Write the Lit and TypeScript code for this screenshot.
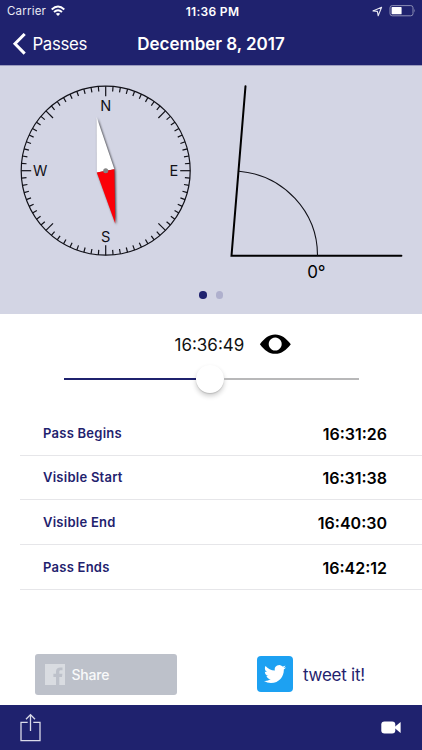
import { LitElement, html, css, svg } from "lit";
import { customElement, state } from "lit/decorators.js";

const TICKS = Array.from({ length: 72 }, (_, i) => i * 5);

@customElement("pass-compass")
class PassCompass extends LitElement {
  static styles = css`
    :host { display: block; width: 211px; height: 248px; }
    svg { display: block; }
    .line { stroke: #111118; stroke-width: 1.2; fill: none; }
    .letter { font: 400 14.6px Inter, sans-serif; fill: #111118; text-anchor: middle; }
    .needle { filter: drop-shadow(1px 1px 1.3px rgba(0, 0, 0, 0.7)); }
  `;
  render() {
    return html`<svg width="211" height="248" viewBox="0 66 211 248">
      <circle class="line" cx="105.7" cy="170.7" r="84.5" />
      ${TICKS.map(
        (a) => svg`<line class="line" x1="105.7" y1="86.2" x2="105.7" y2=${a % 45 === 0 ? 96.2 : 91.2}
          transform="rotate(${a} 105.7 170.7)" />`
      )}
      <text class="letter" x="105.7" y="111">N</text>
      <text class="letter" x="105.7" y="242.4">S</text>
      <text class="letter" x="40.2" y="176.4">W</text>
      <text class="letter" x="173.8" y="176.4">E</text>
      <g class="needle">
        <path d="M96.6 117 L114.4 169.2 L96.8 172.5Z" fill="#fff" />
        <path d="M114.4 169.2 L115.3 223.8 L96.8 172.5Z" fill="#fb0007" />
      </g>
      <circle cx="105.7" cy="170.7" r="2.5" fill="#858585" />
    </svg>`;
  }
}

@customElement("pass-elevation")
class PassElevation extends LitElement {
  static styles = css`
    :host { display: block; width: 211px; height: 248px; }
    svg { display: block; }
    .ray { stroke: #000; stroke-width: 2; fill: none; stroke-linecap: round; stroke-linejoin: miter; }
    .arc { stroke: #111118; stroke-width: 1.1; fill: none; }
    .value { font: 400 17px Inter, sans-serif; fill: #000; text-anchor: middle; letter-spacing: -0.4px; }
  `;
  render() {
    return html`<svg width="211" height="248" viewBox="211 66 211 248">
      <path class="ray" d="M245.5 86.2 L231.5 255.7 H401.4" />
      <path class="arc" d="M317.5 255.7 A86 84.5 0 0 0 239 171.2" />
      <text class="value" x="316.2" y="277.7">0°</text>
    </svg>`;
  }
}

@customElement("app-root")
class AppRoot extends LitElement {
  static styles = css`
    :host {
      display: flex; flex-direction: column; width: 422px; height: 750px;
      background: #fff; font-family: Inter, "Liberation Sans", sans-serif; overflow: hidden;
    }
    svg { display: block; }
    header { background: #1f226e; color: #fff; height: 66px; border-bottom: 1px solid #9a9bbd; box-sizing: border-box; }
    .status { display: grid; grid-template-columns: 1fr auto 1fr; align-items: center; height: 22px; padding: 0 6px 0 7px; font-size: 11.5px; }
    .carrier { display: flex; align-items: center; gap: 5px; letter-spacing: 0.2px; color: #e9e9f3; }
    .clock { font-size: 12px; font-weight: 600; letter-spacing: 0.3px; padding-left: 2px; }
    .power { display: flex; justify-content: flex-end; align-items: center; gap: 6px; }
    .nav { display: grid; grid-template-columns: 1fr auto 1fr; align-items: center; height: 43px; padding: 0 12px; }
    .back { display: flex; align-items: center; gap: 6.5px; font-size: 16.8px; letter-spacing: -0.35px; }
    .title { font-size: 17px; font-weight: 600; letter-spacing: -0.04px; }
    .sky { position: relative; background: #d3d5e4; height: 248px; display: flex; }
    .dots { position: absolute; left: 0; right: 0; top: 225px; display: flex; justify-content: center; gap: 9px; }
    .dot { width: 7.5px; height: 7.5px; border-radius: 50%; background: #afb0cd; }
    .dot.on { background: #1f226e; }
    .now { display: flex; align-items: center; height: 60px; padding-left: 174.5px; gap: 14px; font-size: 17px; color: #111; }
    .now .time { width: 70px; white-space: nowrap; padding-top: 1px; }
    .slider { display: flex; align-items: center; height: 10px; margin: 0 63.5px; }
    .done { height: 2px; background: #1f226e; }
    .rest { height: 2px; background: #b8b8b9; flex: 1; }
    .thumb { width: 28px; height: 28px; flex: none; border-radius: 50%; background: #fff; box-shadow: 0 3px 5px rgba(0,0,0,0.2), 0 1px 1px rgba(0,0,0,0.12); }
    .list { margin: 27px 0 0 20px; }
    .row { display: flex; align-items: center; justify-content: space-between; height: 44.67px; box-sizing: border-box; border-bottom: 1px solid #e6e6e9; padding: 0 35px 0 23px; }
    .label { color: #1f226e; font-size: 13px; font-weight: 600; letter-spacing: 0.25px; }
    .when { color: #000; font-size: 16px; font-weight: 600; padding-top: 2px; }
    .actions { display: flex; align-items: center; flex: 1; padding: 54px 0 0 35px; gap: 80px; }
    .share { display: flex; align-items: center; gap: 6.5px; width: 142px; height: 41px; box-sizing: border-box; padding-left: 10px; border-radius: 3px; background: #bdc1ca; color: #f8f9fa; font-size: 14px; font-weight: 500; letter-spacing: -0.2px; }
    .tweet { display: flex; align-items: center; gap: 10px; color: #1f226e; font-size: 17px; letter-spacing: -0.25px; }
    .tweet span { padding-top: 1px; }
    footer { display: flex; justify-content: space-between; align-items: center; height: 45px; box-sizing: border-box; background: #1f226e; padding: 0 21px 1px 20px; }
  `;

  @state() private progress = 0.449;
  private rows = [
    ["Pass Begins", "16:31:26"],
    ["Visible Start", "16:31:38"],
    ["Visible End", "16:40:30"],
    ["Pass Ends", "16:42:12"],
  ];

  render() {
    return html`
      <header>
        <div class="status">
          <div class="carrier">Carrier
            <svg width="14" height="12" viewBox="0 0 14 12" fill="none" stroke="#fff" stroke-width="1.9">
              <path d="M.7 4.5 Q7 -1.4 13.3 4.5" /><path d="M3 7 Q7 3.3 11 7" />
              <path d="M4.8 8.8 Q7 7 9.2 8.8 L7 11Z" fill="#fff" stroke="none" />
            </svg>
          </div>
          <div class="clock">11:36 PM</div>
          <div class="power">
            <svg width="11" height="11" viewBox="0 0 11 11" fill="none" stroke="#e5e5f0" stroke-width="1.1" stroke-linejoin="round">
              <path d="M.9 4.9 L9.6 1.2 L6.2 9.8 L5.4 5.4Z" />
            </svg>
            <svg width="27" height="12" viewBox="0 0 27 12">
              <rect x="1" y=".6" width="23" height="10.2" rx="2.2" fill="none" stroke="#8d8fb5" />
              <rect x="2.6" y="2.1" width="10" height="7.2" rx=".6" fill="#fff" />
              <path d="M25.2 3.8 Q26.6 5.7 25.2 7.6Z" fill="#8d8fb5" />
            </svg>
          </div>
        </div>
        <div class="nav">
          <div class="back">
            <svg width="14" height="22" viewBox="0 0 14 22" fill="none" stroke="#fff" stroke-width="3"><path d="M12.7 1 L3 10.8 L12.7 20.6" /></svg>
            <span>Passes</span>
          </div>
          <div class="title">December 8, 2017</div>
        </div>
      </header>
      <section class="sky">
        <pass-compass></pass-compass>
        <pass-elevation></pass-elevation>
        <div class="dots"><span class="dot on"></span><span class="dot"></span></div>
      </section>
      <div class="now">
        <span class="time">16:36:49</span>
        <svg width="33" height="20" viewBox="0 0 33 20">
          <path fill="#000" fill-rule="evenodd" d="M.9 10.2 C5.5 4.2 10 .5 16.2 .5 C22.4 .5 27 4.2 31.8 10.2 C27 16.2 22.4 19.8 16.2 19.8 C10 19.8 5.5 16.2 .9 10.2Z M16.2 3.6 a6.5 6.5 0 1 0 .01 0Z" />
        </svg>
      </div>
      <div class="slider">
        <div class="done" style="width:${this.progress * 295}px"></div>
        <div class="thumb"></div>
        <div class="rest"></div>
      </div>
      <div class="list">
        ${this.rows.map(([l, t]) => html`<div class="row"><span class="label">${l}</span><span class="when">${t}</span></div>`)}
      </div>
      <div class="actions">
        <div class="share">
          <svg width="20" height="21" viewBox="0 0 20 21">
            <rect width="20" height="21" fill="#d9dce1" />
            <path fill="#bdc1ca" d="M11 21 V13 H8.4 V9.8 H11 V7.6 C11 4.8 12.7 3.4 15.2 3.4 L17.5 3.5 V6.3 H15.9 C14.6 6.3 14.3 6.9 14.3 7.9 V9.8 H17.4 L17 13 H14.3 V21Z" />
          </svg>
          <span>Share</span>
        </div>
        <div class="tweet">
          <svg width="36" height="36" viewBox="0 0 36 36">
            <rect width="36" height="36" rx="4" fill="#1da1f2" />
            <path transform="translate(7 7) scale(.92)" fill="#fff" d="M23.95 4.57a10 10 0 0 1-2.82.77 4.96 4.96 0 0 0 2.16-2.72c-.95.55-2 .95-3.13 1.18a4.92 4.92 0 0 0-8.38 4.48C7.69 8.1 4.07 6.13 1.64 3.16a4.82 4.82 0 0 0-.67 2.48c0 1.71.87 3.21 2.19 4.1a4.9 4.9 0 0 1-2.23-.62v.06a4.92 4.92 0 0 0 3.95 4.83 5 5 0 0 1-2.21.08 4.94 4.94 0 0 0 4.6 3.42A9.87 9.87 0 0 1 0 19.54a14 14 0 0 0 7.55 2.21c9.05 0 14-7.5 14-13.98 0-.21 0-.42-.02-.63a9.94 9.94 0 0 0 2.46-2.55z" />
          </svg>
          <span>tweet it!</span>
        </div>
      </div>
      <footer>
        <svg width="21" height="29" viewBox="0 0 21 29" fill="none" stroke="#dadbe9" stroke-width="1.3">
          <path d="M7.7 9.3 H1 V27.7 H20 V9.3 H13.3 M10.5 18 V2 M6 6.3 L10.5 1.6 L15 6.3" />
        </svg>
        <svg width="20" height="13" viewBox="0 0 20 13" fill="#fff">
          <rect x=".3" y=".4" width="14" height="12" rx="3.2" /><path d="M13 6.5 L19.6 .9 V12.1Z" />
        </svg>
      </footer>
    `;
  }
}
